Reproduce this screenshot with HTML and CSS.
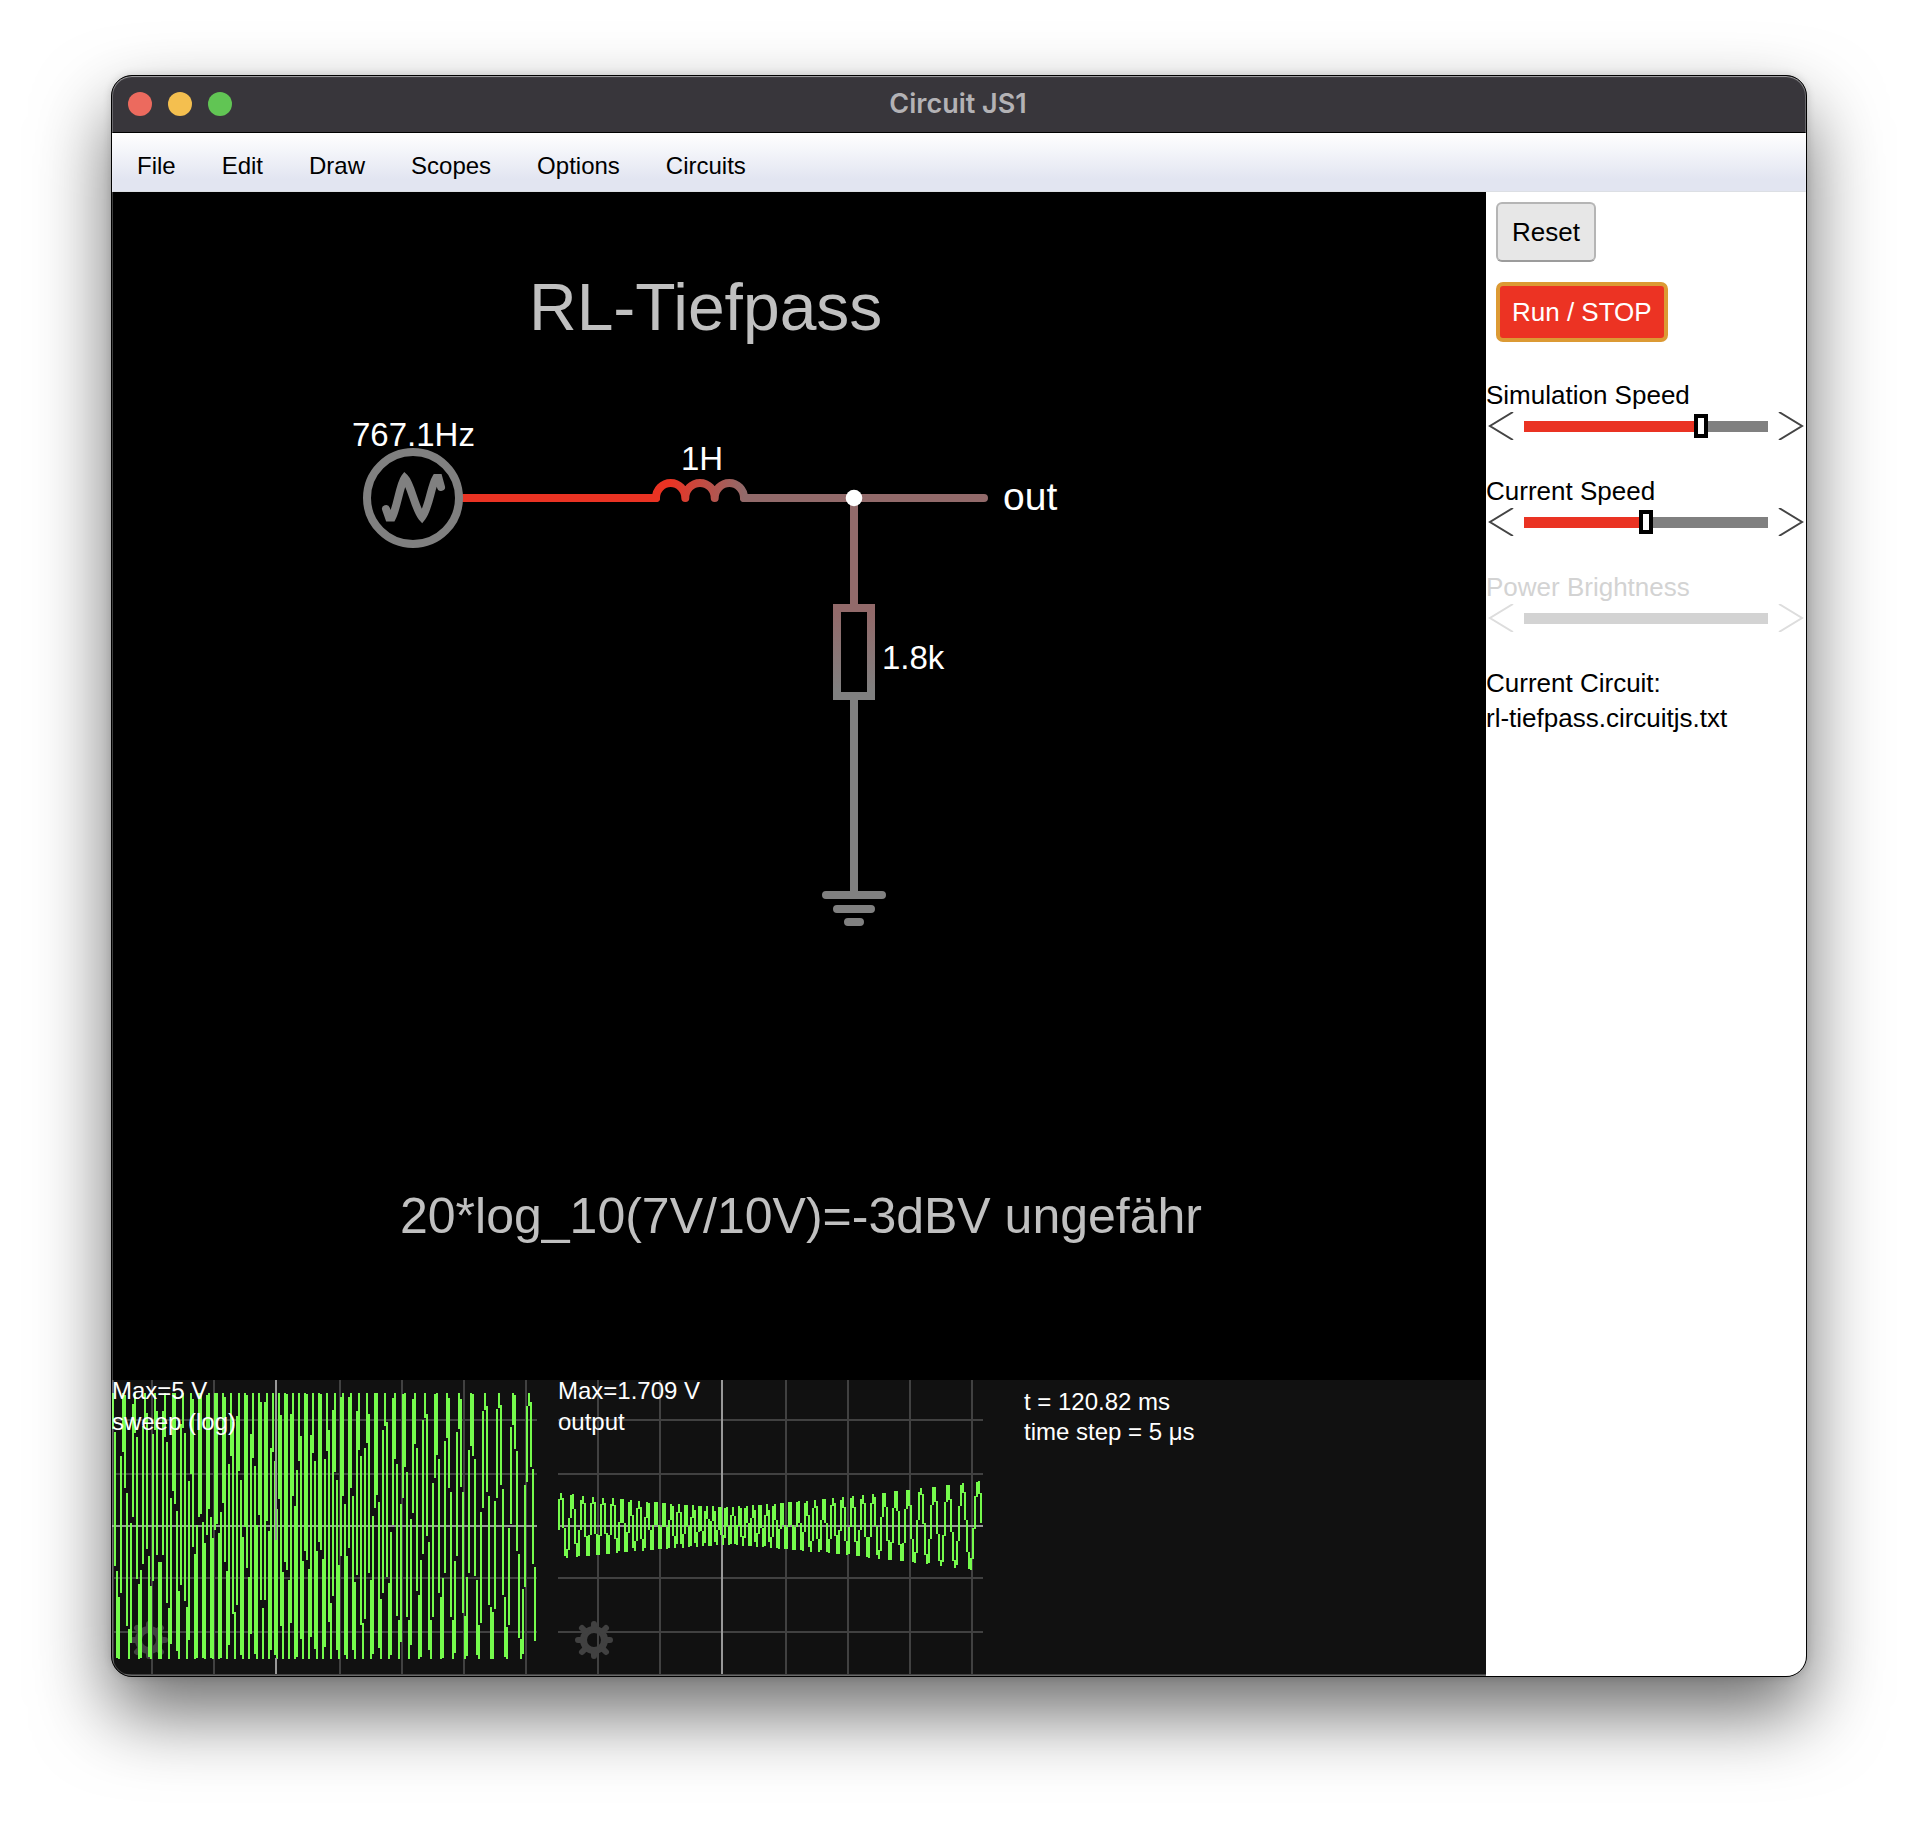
FILE: index.html
```html
<!DOCTYPE html>
<html lang="en">
<head>
<meta charset="utf-8">
<title>Circuit JS1</title>
<link rel="stylesheet" href="styles.css">
</head>
<body>
<div class="window">
  <header class="titlebar">
    <div class="lights">
      <span class="light light-close"></span>
      <span class="light light-min"></span>
      <span class="light light-max"></span>
    </div>
    <h1 class="title">Circuit JS1</h1>
  </header>
  <nav class="menubar">
    <button type="button">File</button>
    <button type="button">Edit</button>
    <button type="button">Draw</button>
    <button type="button">Scopes</button>
    <button type="button">Options</button>
    <button type="button">Circuits</button>
  </nav>
  <div class="workspace">
    <main class="canvas">
      <svg class="circuit" viewBox="112 192 1374 1188">
        <defs>
          <linearGradient id="coil-volts" gradientUnits="userSpaceOnUse" x1="656" y1="0" x2="744" y2="0">
            <stop offset="0.15" stop-color="#ea3323"/>
            <stop offset="1" stop-color="#926a6a"/>
          </linearGradient>
          <linearGradient id="res-volts" gradientUnits="userSpaceOnUse" x1="0" y1="604" x2="0" y2="700">
            <stop offset="0.1" stop-color="#926a6a"/>
            <stop offset="0.9" stop-color="#808080"/>
          </linearGradient>
        </defs>
        <text class="note note-title" x="529" y="330">RL-Tiefpass</text>
        <text class="note note-formula" x="400" y="1233">20*log_10(7V/10V)=-3dBV ungefähr</text>
        <g class="wires">
          <path d="M463 498H656" stroke="#ea3323"/>
          <path d="M744 498H984M854 498V608" stroke="#926a6a"/>
          <path d="M656 498a14.6 15 0 0 1 29.3 0a14.6 15 0 0 1 29.4 0a14.6 15 0 0 1 29.3 0" stroke="url(#coil-volts)"/>
          <path class="sharp" d="M837 608H871V696H837Z" stroke="url(#res-volts)"/>
          <path d="M854 700V895M826 895H882M837 909H871M848 922H860" stroke="#808080"/>
          <circle cx="413" cy="498" r="46" stroke="#808080"/>
          <path class="sharp" d="M386 509L389 517.500H392C397 508 400 484 404.700 478C411 484 415 509 422 517C429 508 431 486 436 478H438.500L441 487" stroke="#808080"/>
        </g>
        <circle cx="854" cy="498" r="8.300" fill="#fff"/>
        <text class="value" x="352" y="446">767.1Hz</text>
        <text class="value" x="681" y="470">1H</text>
        <text class="value" x="882" y="669">1.8k</text>
        <text class="terminal" x="1003" y="510">out</text>
      </svg>
      <section class="scopes">
        <svg class="scope" viewBox="0 0 425 294">
          <path class="grid" d="M0 40H425M0 94H425M0 198H425M0 252H425M1 0V294M40 0V294M102 0V294M228 0V294M290 0V294M352 0V294M414 0V294"/>
          <path class="axis" d="M0 146H425"/>
          <use href="#gear" x="37" y="260"/>
          <path class="trace" id="trace-sweep"/>
          <path class="axis" d="M164 0V160M164 278V294"/>
          <text x="0" y="19">Max=5 V</text>
          <text x="0" y="50">sweep (log)</text>
        </svg>
        <svg class="scope" viewBox="0 0 425 294">
          <defs>
            <g id="gear">
              <circle r="10.500" fill="none" stroke="#414141" stroke-width="7"/>
              <path d="M0-12V-16M0 12V16M-12 0H-16M12 0H16M-8.500-8.500L-12-12M8.500-8.500L12-12M-8.500 8.500L-12 12M8.500 8.500L12 12" fill="none" stroke="#414141" stroke-width="6" stroke-linecap="round"/>
            </g>
          </defs>
          <path class="grid" d="M0 40H425M0 94H425M0 198H425M0 252H425M40 0V294M102 0V294M228 0V294M290 0V294M352 0V294M414 0V294"/>
          <path class="axis" d="M0 146H425M164 0V294"/>
          <use href="#gear" x="36" y="260"/>
          <path class="trace" id="trace-output"/>
          <text x="0" y="19">Max=1.709 V</text>
          <text x="0" y="50">output</text>
        </svg>
        <div class="info">
          <p>t = 120.82 ms</p>
          <p>time step = 5 μs</p>
        </div>
      </section>
    </main>
    <aside class="sidebar">
      <div class="actions">
        <button type="button" class="btn">Reset</button>
        <button type="button" class="btn btn-run">Run / STOP</button>
      </div>
      <div class="control">
        <label for="sim-speed">Simulation Speed</label>
        <div class="slider">
          <button type="button" class="step" aria-label="Slower"><svg viewBox="0 0 26 28"><path d="M25 0L2 14L25 28"/></svg></button>
          <input type="range" id="sim-speed" min="0" max="100" value="74" style="--fill:74%">
          <button type="button" class="step" aria-label="Faster"><svg viewBox="0 0 26 28"><path d="M1 0L24 14L1 28"/></svg></button>
        </div>
      </div>
      <div class="control">
        <label for="cur-speed">Current Speed</label>
        <div class="slider">
          <button type="button" class="step" aria-label="Slower"><svg viewBox="0 0 26 28"><path d="M25 0L2 14L25 28"/></svg></button>
          <input type="range" id="cur-speed" min="0" max="100" value="50" style="--fill:50%">
          <button type="button" class="step" aria-label="Faster"><svg viewBox="0 0 26 28"><path d="M1 0L24 14L1 28"/></svg></button>
        </div>
      </div>
      <div class="control control-off">
        <label for="power">Power Brightness</label>
        <div class="slider">
          <button type="button" class="step" aria-label="Dimmer" disabled><svg viewBox="0 0 26 28"><path d="M25 0L2 14L25 28"/></svg></button>
          <input type="range" id="power" min="0" max="100" value="50" disabled>
          <button type="button" class="step" aria-label="Brighter" disabled><svg viewBox="0 0 26 28"><path d="M1 0L24 14L1 28"/></svg></button>
        </div>
      </div>
      <div class="current">
        <p>Current Circuit:</p>
        <p>rl-tiefpass.circuitjs.txt</p>
      </div>
    </aside>
  </div>
</div>
<script src="scope.js"></script>
</body>
</html>
```
FILE: styles.css
```css
* { box-sizing: border-box; }
body {
  margin: 0;
  min-height: 100vh;
  padding: 75px 111px;
  background: #fff;
  color: #000;
  font-family: "Liberation Sans", Arial, Helvetica, sans-serif;
  font-size: 26px;
  line-height: 30px;
  overflow-x: hidden;
}
p, h1 { margin: 0; }
button { font: inherit; color: inherit; }

.window {
  position: relative;
  border: 1px solid #000;
  border-radius: 21px;
  overflow: hidden;
  background: #000;
  box-shadow: 0 36px 76px rgba(0, 0, 0, 0.58), 0 0 8px rgba(0, 0, 0, 0.15);
}
.window::after {
  content: "";
  position: absolute;
  inset: 0;
  border-radius: 20px;
  box-shadow: inset 0 1px 1px rgba(255, 255, 255, 0.4), inset 0 0 0 1px rgba(255, 255, 255, 0.22);
  pointer-events: none;
}

.titlebar {
  display: grid;
  grid-template-columns: 1fr auto 1fr;
  align-items: center;
  height: 57px;
  padding: 0 18px 0 16px;
  background: #38363b;
  border-bottom: 1px solid #000;
}
.lights { display: flex; gap: 16px; }
.light { width: 24px; height: 24px; border-radius: 50%; }
.light-close { background: #ec6a5e; }
.light-min { background: #f4bf4f; }
.light-max { background: #61c554; }
.title {
  font-family: Inter, "Liberation Sans", sans-serif;
  font-size: 27px;
  font-weight: 600;
  color: #b3b2b5;
}

.menubar {
  display: flex;
  height: 59px;
  padding: 0 2px;
  background: linear-gradient(#fff, #e2e5f1 80%);
  border-bottom: 1px solid #dcdfe4;
}
.menubar button {
  padding: 8px 23px 0;
  border: 0;
  background: none;
  font-size: 24px;
}

.workspace { display: flex; }
.canvas { flex: 1; min-width: 0; background: #000; }
.circuit { display: block; width: 100%; }
.circuit .wires path, .circuit .wires circle {
  fill: none;
  stroke-width: 8px;
  stroke-linecap: round;
  stroke-linejoin: round;
}
.circuit .wires .sharp { stroke-linejoin: miter; }
.note { fill: #c0c0c0; }
.note-title { font-size: 66px; }
.note-formula { font-size: 50px; }
.value { font-size: 33px; fill: #fff; }
.terminal { font-size: 39px; fill: #fff; }

.scopes {
  display: flex;
  gap: 21px;
  background: #111;
  border-bottom: 2px solid #414141;
}
.scope { flex: 0 1 425px; min-width: 0; height: 294px; overflow: visible; }
.scope text { font-size: 24px; fill: #fff; }
.grid { fill: none; stroke: #414141; stroke-width: 2px; }
.axis { fill: none; stroke: #989898; stroke-width: 2px; }
.trace { fill: #75fb4c; }
.info {
  padding: 7px 0 0 20px;
  color: #fff;
  font-size: 24px;
  white-space: nowrap;
}

.sidebar {
  flex: 0 0 320px;
  display: flex;
  flex-direction: column;
  gap: 34px;
  padding-top: 10px;
  background: #fff;
}
.actions {
  display: flex;
  flex-direction: column;
  align-items: flex-start;
  gap: 20px;
  padding: 0 10px 4px;
}
.btn {
  height: 60px;
  padding: 0 14px;
  border: 2px solid #b5b5b5;
  border-bottom-color: #9c9c9c;
  border-radius: 6px;
  background: #e7e7e7;
}
.btn-run {
  padding: 0 12px;
  border: 4px solid #dc9a34;
  border-radius: 7px;
  background: #ec3323;
  color: #fff;
}
.control label { display: block; }
.slider { display: flex; align-items: center; height: 32px; padding: 0 2px; }
.step { display: block; flex: none; width: 26px; height: 28px; padding: 0; border: 0; background: none; }
.step svg { display: block; width: 26px; height: 28px; }
.step path { fill: none; stroke: #444; stroke-width: 2px; }
.slider input {
  -webkit-appearance: none;
  appearance: none;
  flex: 1;
  min-width: 0;
  height: 24px;
  margin: 0 10px;
  background: none;
}
.slider input::-webkit-slider-runnable-track {
  height: 11px;
  background: linear-gradient(to right, #ea3323 var(--fill), #808080 var(--fill));
}
.slider input::-webkit-slider-thumb {
  -webkit-appearance: none;
  width: 14px;
  height: 24px;
  margin-top: -7px;
  border: 4px solid #000;
  background: #fff;
}
.control-off label { color: #d3d3d3; }
.control-off .step path { stroke: #ddd; }
.control-off input::-webkit-slider-runnable-track { background: #d3d3d3; }
.control-off input::-webkit-slider-thumb { visibility: hidden; }
.current { display: flex; flex-direction: column; gap: 5px; }
```
FILE: scope.js
```js
// Positions of the successive maxima of each signal, in scope pixels.
const sweepPeaks = [-11, 0.6, 11.7, 22.6, 33.1, 43.2, 52.7, 61.9, 70.9, 79.6, 88, 96.1, 104, 111.7, 119.2,
  126.6, 133.8, 140.8, 147.6, 154.3, 160.9, 167.4, 173.9, 180.5, 187.1, 193.9, 200.8, 207.9, 215.1,
  222.5, 230.2, 238.2, 246.6, 255.2, 264, 273, 282.3, 292.1, 302.4, 313, 324.1, 335.5, 347.4, 359.8,
  373, 387, 401.6, 417, 433.6];
const outputPeaks = [-8.3, 3, 14.3, 24.8, 35, 45, 55, 64, 72.4, 81, 89.6, 98, 106, 113.5, 121, 128.2,
  135.2, 142, 148.7, 155.3, 161.8, 168.3, 174.9, 181.6, 188.4, 195.2, 202.1, 209.1, 216.4, 224, 232,
  240, 248.4, 257, 265.8, 275, 284.6, 294.5, 304.7, 315.2, 326.2, 337.8, 350, 362.8, 376, 390, 404.4,
  420, 436.5];

function signal(peaks, x) {
  let i = 0;
  while (i < peaks.length - 2 && peaks[i + 1] <= x) i++;
  return Math.cos(2 * Math.PI * (x - peaks[i]) / (peaks[i + 1] - peaks[i]));
}

// One two-pixel column per sample, spanning the range covered in that time.
function trace(id, peaks, amplitude) {
  let d = "";
  for (let x = 0; x < 424; x += 2) {
    let lo = Infinity, hi = -Infinity;
    for (let s = 0; s <= 2; s += 0.1) {
      const y = 146 - amplitude(x) * signal(peaks, x + s);
      lo = Math.min(lo, y);
      hi = Math.max(hi, y);
    }
    const top = Math.round(lo) - 1, bottom = Math.round(hi) + 1;
    d += `M${x} ${top}h2V${bottom}h-2Z`;
  }
  document.getElementById(id).setAttribute("d", d);
}

trace("trace-sweep", sweepPeaks, () => 132);
trace("trace-output", outputPeaks, x => x < 170 ? 18 + 14 * (1 - x / 170) ** 1.3 : 18 + 26 * ((x - 170) / 254) ** 1.2);
```
